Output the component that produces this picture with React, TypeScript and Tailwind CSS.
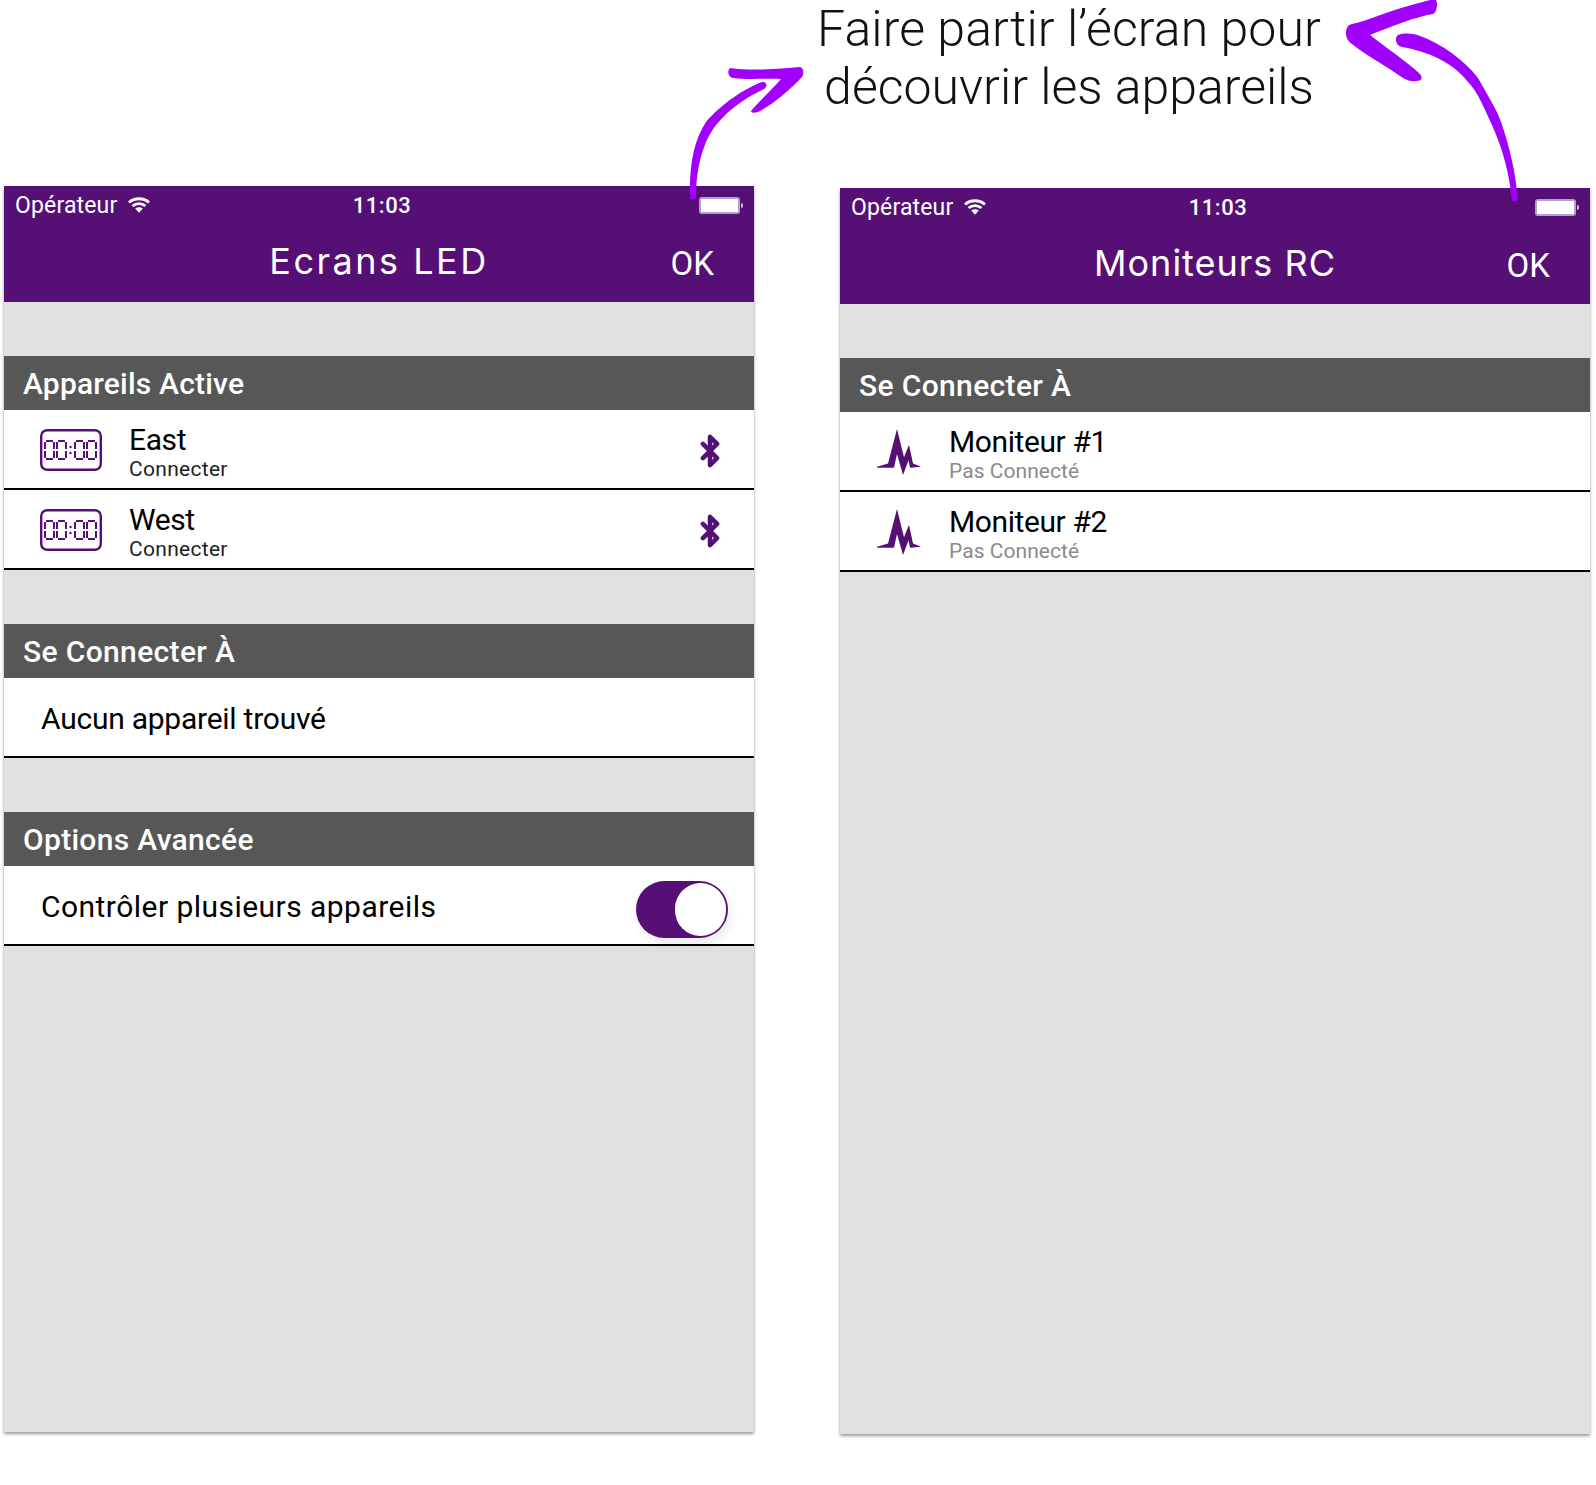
import { Bluetooth } from "lucide-react"

const PURPLE = "#561075"

function Wifi() {
  return (
    <svg width="22" height="16" viewBox="0 0 22 16" className="ml-[11px] mb-[3px]">
      <path d="M1 5.5C6.5 .5 15.5 .5 21 5.5" fill="none" stroke="white" strokeWidth="2.8" />
      <path d="M4.6 9C8.2 5.8 13.8 5.8 17.4 9" fill="none" stroke="white" strokeWidth="2.8" />
      <path d="M7.2 11.4L11 15.8L14.8 11.4C12.6 9.8 9.4 9.8 7.2 11.4Z" fill="white" />
    </svg>
  )
}

function Battery() {
  return (
    <div className="flex items-center">
      <div className="w-[41px] h-[17px] rounded-[3px] bg-white border-2 border-[#b7a0c6]" />
      <div className="w-[2px] h-[5px] ml-[1px] rounded-r-sm bg-[#cdbdd8]" />
    </div>
  )
}

// one digit of the LED clock icon, seven segments minus the middle bar
function Digit({ x }: { x: number }) {
  return (
    <path
      d={`M${x + 1} 12H${x + 8}M${x + 1} 30H${x + 8}M${x} 13V20M${x + 9} 13V20M${x} 22V29M${x + 9} 22V29`}
      fill="none"
      stroke={PURPLE}
      strokeWidth="2"
    />
  )
}

function LedIcon() {
  return (
    <svg width="62" height="42" viewBox="0 0 62 42" className="shrink-0">
      <rect x="1.2" y="1.2" width="59.6" height="39.6" rx="6" fill="none" stroke={PURPLE} strokeWidth="2.4" />
      <Digit x={5} />
      <Digit x={17} />
      <circle cx="30.5" cy="18" r="1.2" fill={PURPLE} />
      <circle cx="30.5" cy="24" r="1.2" fill={PURPLE} />
      <Digit x={35} />
      <Digit x={47} />
    </svg>
  )
}

function PulseIcon() {
  return (
    <svg width="44" height="46" viewBox="0 0 44 44" preserveAspectRatio="none" className="shrink-0">
      <path
        d="M0 36L11 33L20 0L27 27L32 15L36 33L44 36L33 37L31.5 30L26 44L20 24L17 37L0 37Z"
        fill={PURPLE}
      />
    </svg>
  )
}

function Toggle() {
  return (
    <div className="flex justify-end mt-[9px] w-[92px] h-[57px] p-[2px] rounded-full bg-[#561075] shadow-[3px_6px_10px_rgba(0,0,0,0.08)]">
      <div className="w-[51px] h-[53px] rounded-full bg-white" />
    </div>
  )
}

function Section({ title, tracking }: { title: string; tracking: string }) {
  return (
    <div className={`flex items-center h-[54px] pl-[19px] bg-[#575757] text-white text-[30px] font-medium ${tracking}`}>
      {title}
    </div>
  )
}

function DeviceRow({
  icon,
  title,
  sub,
  subClass,
  textLeft,
  bluetooth,
}: {
  icon: React.ReactNode
  title: string
  sub: string
  subClass: string
  textLeft: string
  bluetooth?: boolean
}) {
  return (
    <div className="flex items-center h-[80px] bg-white border-b-2 border-black">
      {icon}
      <div className={`flex-1 pt-[5px] ${textLeft}`}>
        <div className="text-[30px] leading-[34px] tracking-[-0.4px] text-black">{title}</div>
        <div className={`text-[21px] leading-[24px] ${subClass}`}>{sub}</div>
      </div>
      {bluetooth && (
        <Bluetooth size={34} strokeWidth={3.2} color={PURPLE} className="mr-[27px] mt-[3px]" />
      )}
    </div>
  )
}

function Phone({
  title,
  titleClass,
  className,
  children,
}: {
  title: string
  titleClass: string
  className: string
  children: React.ReactNode
}) {
  return (
    <div className={`flex flex-col w-[750px] h-[1246px] bg-[#dfe0e2] shadow-[0_2px_3px_rgba(0,0,0,0.4)] ${className}`}>
      <div className="h-[116px] bg-[#561075] text-white">
        <div className="grid grid-cols-3 items-center h-[38px] px-[11px] text-[23px] tracking-[0.15px]">
          <div className="flex items-center mt-[2px] whitespace-nowrap">
            Opérateur
            <Wifi />
          </div>
          <div className="text-center font-medium tracking-[0.5px] pl-[6px] text-[22px]">11:03</div>
          <div className="flex justify-end">
            <Battery />
          </div>
        </div>
        <div className="relative flex items-center justify-center h-[78px] pb-[2px]">
          <span className={`text-[36px] mb-[2px] font-['Inter'] ${titleClass}`}>{title}</span>
          <span className="absolute right-[40px] mt-[3px] text-[33px]">OK</span>
        </div>
      </div>
      {children}
    </div>
  )
}

export default function App() {
  return (
    <div className="relative w-[1596px] h-[1485px] bg-white font-['Roboto',sans-serif] overflow-hidden">
      <div className="h-[186px] ml-[769px] w-[600px] text-center text-[50px] leading-[58px] font-light text-[#111]">
        <div className="tracking-[0.1px]">Faire partir l’écran pour</div>
        <div>découvrir les appareils</div>
      </div>

      <div className="flex items-start pl-1">
        <Phone title="Ecrans LED" titleClass="tracking-[2.5px]" className="">
          <div className="h-[54px]" />
          <Section title="Appareils Active" tracking="tracking-[0.2px]" />
          {["East", "West"].map((name) => (
            <DeviceRow
              key={name}
              icon={<div className="pl-[36px] mt-[2px]"><LedIcon /></div>}
              title={name}
              sub="Connecter"
              subClass="text-[#222] tracking-[0.3px]"
              textLeft="pl-[27px]"
              bluetooth
            />
          ))}
          <div className="h-[54px]" />
          <Section title="Se Connecter À" tracking="tracking-[0.35px]" />
          <div className="flex items-center h-[80px] pl-[37px] pt-[2px] bg-white border-b-2 border-black text-[30px] tracking-[-0.25px] text-black">
            Aucun appareil trouvé
          </div>
          <div className="h-[54px]" />
          <Section title="Options Avancée" tracking="tracking-[0.3px]" />
          <div className="flex items-center justify-between h-[80px] pl-[37px] pr-[26px] bg-white border-b-2 border-black text-[30px] tracking-[0.46px] text-black">
            <span className="mt-[3px]">Contrôler plusieurs appareils</span>
            <Toggle />
          </div>
        </Phone>

        <Phone title="Moniteurs RC" titleClass="tracking-[1px]" className="ml-[86px] mt-[2px]">
          <div className="h-[54px]" />
          <Section title="Se Connecter À" tracking="tracking-[0.35px]" />
          {["Moniteur #1", "Moniteur #2"].map((name) => (
            <DeviceRow
              key={name}
              icon={<div className="pl-[37px] mt-[2px]"><PulseIcon /></div>}
              title={name}
              sub="Pas Connecté"
              subClass="text-[#8a8a8a] tracking-[0.05px]"
              textLeft="pl-[28px]"
            />
          ))}
        </Phone>
      </div>

      {/* hand drawn arrows over the top */}
      <svg width="1596" height="1485" viewBox="0 0 1596 1485" className="absolute inset-0 pointer-events-none">
        <g fill="#a100ff">
          <path d="M690 198C689 165 694 140 706 122C720 105 745 88 762 82C767 81 768 87 764 89C747 97 730 108 716 125C702 143 696 170 696 198C695 200 691 200 690 198Z" />
          <path d="M730 68C752 71 778 69 800 67C804 68 804 74 802 77C790 90 772 105 758 112C754 113 751 113 751 111C760 100 772 90 781 79C768 78 750 80 733 78C728 77 727 71 730 68Z" />
          <path d="M1512 200C1509 172 1503 150 1492 125C1484 108 1478 92 1468 82C1455 65 1432 52 1402 47C1396 46 1394 38 1398 35C1404 33 1412 33 1420 36C1442 44 1464 60 1478 78C1488 96 1497 110 1501 122C1510 148 1515 170 1518 199C1517 202 1513 202 1512 200Z" />
          <path d="M1436 0C1438 3 1437 12 1433 14C1415 17 1395 25 1370 35C1385 47 1405 60 1420 74C1423 78 1422 81 1416 81C1409 82 1405 79 1400 76C1385 65 1365 55 1352 44C1345 40 1344 30 1349 25C1355 23 1365 21 1372 18C1390 11 1410 5 1430 0Z" />
        </g>
      </svg>
    </div>
  )
}
